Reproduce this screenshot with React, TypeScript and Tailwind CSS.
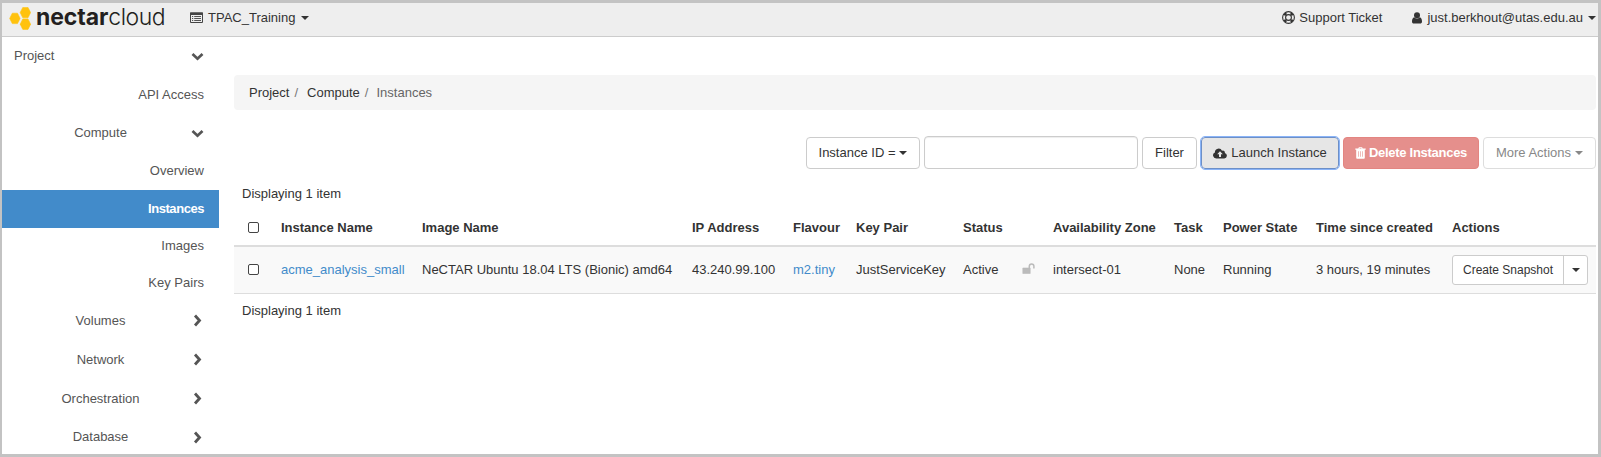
import type { ReactNode } from "react";

function Caret({ className = "" }: { className?: string }) {
  return (
    <svg width="8" height="4" viewBox="0 0 8 4" className={`shrink-0 ${className}`}>
      <path d="M0 0h8L4 4z" fill="currentColor" />
    </svg>
  );
}

function Chevron({ open }: { open: boolean }) {
  return open ? (
    <svg width="13" height="9" viewBox="0 0 13 9" className="absolute left-[189px] text-[#555]">
      <path d="M1.500 2 6.500 6.700 11.500 2" fill="none" stroke="currentColor" strokeWidth="2.7" />
    </svg>
  ) : (
    <svg width="9" height="13" viewBox="0 0 9 13" className="absolute left-[191px] text-[#555]">
      <path d="M2 1.5 6.5 6.5 2 11.5" fill="none" stroke="currentColor" strokeWidth="2.8" />
    </svg>
  );
}

function Hexagon({ x, y }: { x: number; y: number }) {
  return (
    <path
      transform={`translate(${x} ${y})`}
      d="M3 0h5.200l2.600 5.200-2.600 5.200H3L.4 5.200z"
      fill="#ffc20e"
      stroke="#ffc20e"
      strokeWidth=".6"
      strokeLinejoin="round"
    />
  );
}

function Logo() {
  return (
    <div className="flex h-full items-center">
      <svg width="22" height="23" viewBox="0 0 22 23" className="ml-[7px] mt-[2px] shrink-0">
        <Hexagon x={0.3} y={6.2} />
        <Hexagon x={10.8} y={0.4} />
        <Hexagon x={10.8} y={12} />
      </svg>
      <span className="mb-[2px] ml-[5px] w-[130px] whitespace-nowrap font-['Inter',sans-serif] text-[23px] leading-6 text-[#231f20]">
        <span className="font-bold tracking-[-0.1px]">nectar</span>
        <span className="font-light tracking-[-0.45px]">cloud</span>
      </span>
    </div>
  );
}

function ListIcon() {
  return (
    <svg width="13" height="11" viewBox="0 0 13 11" className="shrink-0">
      <path d="M.5 1h12v9.5H.5z" fill="none" stroke="#444" />
      <path d="M0 .5h13V3H0z" fill="#444" />
      <path d="M2 4.5h1.2M4.2 4.5H11M2 6.5h1.2M4.2 6.5H11M2 8.5h1.2M4.2 8.5H11" stroke="#555" />
    </svg>
  );
}

function LifeRing() {
  return (
    <svg width="13" height="13" viewBox="0 0 13 13" className="shrink-0">
      <circle cx="6.5" cy="6.5" r="5.900" fill="none" stroke="#333" strokeWidth="1.100" />
      <circle cx="6.5" cy="6.5" r="2.900" fill="none" stroke="#333" strokeWidth="1.100" />
      <path
        d="M2.300 4.300 4.300 2.300M8.700 2.300l2 2M2.300 8.700l2 2M8.700 10.700l2-2"
        stroke="#333"
        strokeWidth="2.200"
      />
    </svg>
  );
}

function UserIcon() {
  return (
    <svg width="10" height="12" viewBox="0 0 10 12" className="shrink-0">
      <circle cx="5" cy="3.2" r="3" fill="#333" />
      <path d="M2.300 5.300C.7 5.800 0 7.500 0 9.500 0 10.900.8 11.500 1.800 11.500h6.400c1 0 1.800-.6 1.800-2 0-2-.7-3.700-2.300-4.200A3.800 3.800 0 0 1 5 6.500a3.800 3.800 0 0 1-2.700-1.200z" fill="#333" />
    </svg>
  );
}

function CloudUpload() {
  return (
    <svg width="14" height="11" viewBox="0 0 14 11" className="shrink-0">
      <path
        fillRule="evenodd"
        d="M3.300 10.500A3.200 3.200 0 0 1 1.900 4.400 3.700 3.700 0 0 1 9 2.800a1.900 1.900 0 0 1 2.800 2.200A2.800 2.800 0 0 1 11.200 10.500zM7 3.300 4.200 6.200h1.800V9h2V6.200h1.800z"
        fill="#333"
      />
    </svg>
  );
}

function Trash() {
  return (
    <svg width="11" height="12" viewBox="0 0 11 12" className="shrink-0">
      <path
        fillRule="evenodd"
        d="M3.300 1.500 3.900.2h3.200l.6 1.300h3v1.200h-.9v7.800c0 .8-.4 1.300-1.100 1.300H2.300c-.7 0-1.100-.5-1.100-1.300V2.700H.3V1.500zM4.500 1.500h2L6.300 1H4.700zM3.200 4.300v5.400h.6V4.300zM5.200 4.300v5.400h.6V4.300zM7.200 4.300v5.400h.6V4.300z"
        fill="#fff"
      />
    </svg>
  );
}

function Unlock() {
  return (
    <svg width="13" height="11" viewBox="0 0 13 11" className="-ml-px -mt-0.5">
      <path d="M.8 5h7.400v5.500H.8z" fill="#bbb" stroke="#bbb" strokeWidth=".6" strokeLinejoin="round" />
      <path d="M7.300 5V3.200a2.300 2.300 0 0 1 4.600 0V5.500" fill="none" stroke="#bbb" strokeWidth="1.500" />
    </svg>
  );
}

function Checkbox() {
  return <span className="block size-[11px] rounded-[2px] border border-[#444] bg-white" />;
}

function Group({ label, open, className }: { label: string; open: boolean; className: string }) {
  return (
    <div className={`relative flex items-center ${className}`}>
      <span className="w-[197px] text-center">{label}</span>
      <Chevron open={open} />
    </div>
  );
}

function Item({ label, className }: { label: string; className: string }) {
  return <div className={`flex items-center justify-end pr-[15px] ${className}`}>{label}</div>;
}

function Sidebar() {
  return (
    <nav className="w-[217px] shrink-0 text-[#555]">
      <div className="relative flex h-[38px] items-center pl-[12px]">
        Project
        <Chevron open />
      </div>
      <Item label="API Access" className="h-[39px]" />
      <Group label="Compute" open className="h-[38px]" />
      <Item label="Overview" className="h-[38px]" />
      <Item label="Instances" className="h-[38px] bg-[#428bca] font-bold tracking-[-0.45px] text-white" />
      <Item label="Images" className="h-[36px]" />
      <Item label="Key Pairs" className="h-[37px]" />
      <Group label="Volumes" open={false} className="h-[39px]" />
      <Group label="Network" open={false} className="h-[39px]" />
      <Group label="Orchestration" open={false} className="h-[39px]" />
      <Group label="Database" open={false} className="h-[38px]" />
    </nav>
  );
}

function Button({ children, className }: { children: ReactNode; className: string }) {
  return (
    <button className={`flex h-8 items-center justify-center rounded-[4px] border border-[#ccc] ${className}`}>
      {children}
    </button>
  );
}

const columns = [
  { title: "", width: "w-[39px]" },
  { title: "Instance Name", width: "w-[141px]" },
  { title: "Image Name", width: "w-[270px]" },
  { title: "IP Address", width: "w-[101px]" },
  { title: "Flavour", width: "w-[63px]" },
  { title: "Key Pair", width: "w-[107px]" },
  { title: "Status", width: "w-[60px]" },
  { title: "", width: "w-[30px]" },
  { title: "Availability Zone", width: "w-[121px]" },
  { title: "Task", width: "w-[49px]" },
  { title: "Power State", width: "w-[93px]" },
  { title: "Time since created", width: "w-[136px]" },
  { title: "Actions", width: "w-[152px]" },
];

function InstancesTable() {
  return (
    <table className="w-[1362px] table-fixed border-collapse whitespace-nowrap text-left">
      <thead>
        <tr className="h-[38px]">
          {columns.map((c, i) => (
            <th key={i} className={`p-0 pl-2 pt-0.5 font-bold ${c.width}`}>
              {i === 0 ? <div className="pl-1.5"><Checkbox /></div> : c.title}
            </th>
          ))}
        </tr>
      </thead>
      <tbody>
        <tr className="h-[47px] border-b border-t-2 border-[#ddd] bg-[#f9f9f9] *:p-0 *:pl-2">
          <td><div className="pl-1.5"><Checkbox /></div></td>
          <td className="text-[#428bca]">acme_analysis_small</td>
          <td>NeCTAR Ubuntu 18.04 LTS (Bionic) amd64</td>
          <td>43.240.99.100</td>
          <td className="text-[#428bca]">m2.tiny</td>
          <td>JustServiceKey</td>
          <td>Active</td>
          <td><Unlock /></td>
          <td>intersect-01</td>
          <td>None</td>
          <td>Running</td>
          <td>3 hours, 19 minutes</td>
          <td>
            <div className="flex h-[30px] w-[136px] rounded-[3px] border border-[#ccc] bg-white text-[12px]">
              <button className="flex-1">Create Snapshot</button>
              <button className="flex w-6 items-center justify-center border-l border-[#ccc]">
                <Caret />
              </button>
            </div>
          </td>
        </tr>
      </tbody>
    </table>
  );
}

export default function App() {
  return (
    <div className="flex h-[457px] w-[1601px] flex-col overflow-hidden border-b-[3px] border-l-2 border-r-[3px] border-t-[3px] border-[#c3c3c3] bg-white font-['Liberation_Sans',Arial,sans-serif] text-[13px] leading-[18px] text-[#333]">
      <header className="flex h-[34px] shrink-0 items-center border-b border-[#ccc] bg-[#eee] pb-1">
        <Logo />
        <div className="ml-[24px] flex items-center">
          <ListIcon />
          <span className="ml-[5px] mr-[6px]">TPAC_Training</span>
          <Caret />
        </div>
        <div className="ml-auto flex items-center pr-[2px]">
          <LifeRing />
          <span className="ml-[4px] mr-[30px]">Support Ticket</span>
          <UserIcon />
          <span className="ml-[5px] mr-[5px]">just.berkhout@utas.edu.au</span>
          <Caret />
        </div>
      </header>
      <div className="flex flex-1">
        <Sidebar />
        <main className="ml-[15px] w-[1362px] shrink-0 pt-[38px]">
          <div className="flex h-[35px] items-center rounded-[4px] bg-[#f5f5f5] pl-[15px]">
            Project<span className="mx-[5px] mr-[9px] text-[#777]">/</span>
            Compute<span className="mx-[5px] mr-[8px] text-[#777]">/</span>
            <span className="text-[#666]">Instances</span>
          </div>
          <div className="mt-[26px] flex h-[33px] items-end justify-end">
            <Button className="w-[114px] gap-1 bg-white">Instance ID = <Caret /></Button>
            <input className="ml-1 h-[33px] w-[214px] rounded-[4px] border border-[#ccc] bg-white shadow-[inset_0_1px_1px_rgba(0,0,0,0.075)]" />
            <Button className="ml-1 w-[55px] bg-white">Filter</Button>
            <Button className="ml-[4px] w-[138px] gap-1 border-[#6d8fc7]! bg-[#e6e6e6] outline outline-1 outline-[#8ab4f8]">
              <CloudUpload />Launch Instance
            </Button>
            <Button className="ml-[4px] w-[136px] gap-[3px] border-[#e38581]! bg-[#e58f8c] font-bold tracking-[-0.28px] text-white">
              <Trash />Delete Instances
            </Button>
            <Button className="ml-1 w-[113px] gap-1 border-[#ddd]! bg-white text-[#888]">More Actions <Caret /></Button>
          </div>
          <div className="mt-[15px] h-[24px] pl-2 leading-[20px]">Displaying 1 item</div>
          <InstancesTable />
          <div className="mt-[7px] pl-2 leading-[20px]">Displaying 1 item</div>
        </main>
      </div>
    </div>
  );
}
